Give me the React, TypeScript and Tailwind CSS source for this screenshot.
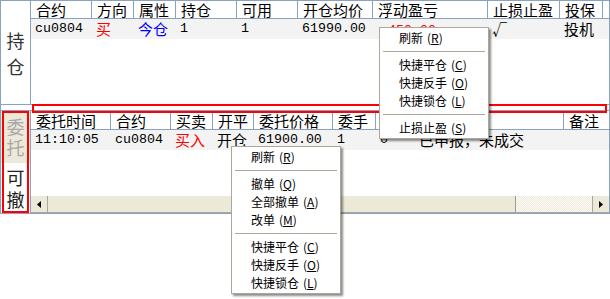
import React from 'react';

const CJK = "font-['Noto_Sans_CJK_SC',sans-serif]";
const MONO = "font-['Liberation_Mono','Noto_Sans_CJK_SC',monospace]";

type Cell = { t: string; w: string; mono?: boolean; color?: string; extra?: string };

const topHeader: Cell[] = [
  { t: '合约', w: 'w-[61px]' },
  { t: '方向', w: 'w-[42px]' },
  { t: '属性', w: 'w-[42px]' },
  { t: '持仓', w: 'w-[61px]' },
  { t: '可用', w: 'w-[61px]' },
  { t: '开仓均价', w: 'w-[75px]' },
  { t: '浮动盈亏', w: 'w-[115px]' },
  { t: '止损止盈', w: 'w-[72px]' },
  { t: '投保', w: 'w-[43px]' },
];

const topRow: Cell[] = [
  { t: 'cu0804', w: 'w-[61px]', mono: true },
  { t: '买', w: 'w-[42px]', color: 'text-[#ff0000]' },
  { t: '今仓', w: 'w-[42px]', color: 'text-[#0000ff]' },
  { t: '1', w: 'w-[61px]', mono: true },
  { t: '1', w: 'w-[61px]', mono: true },
  { t: '61990.00', w: 'w-[75px]', mono: true },
  { t: '-450.00', w: 'w-[115px]', mono: true, color: 'text-[#ff0000]', extra: 'pl-[7px] pt-[3px]' },
  { t: '√', w: 'w-[72px]' },
  { t: '投机', w: 'w-[43px]' },
];

const botHeader: Cell[] = [
  { t: '委托时间', w: 'w-[80px]' },
  { t: '合约', w: 'w-[60px]' },
  { t: '买卖', w: 'w-[42px]' },
  { t: '开平', w: 'w-[41px]' },
  { t: '委托价格', w: 'w-[79px]' },
  { t: '委手', w: 'w-[43px]' },
  { t: '成交', w: 'w-[39px]' },
  { t: '状态', w: 'w-[149px]' },
];

const botRow: Cell[] = [
  { t: '11:10:05', w: 'w-[80px]', mono: true },
  { t: 'cu0804', w: 'w-[60px]', mono: true },
  { t: '买入', w: 'w-[42px]', color: 'text-[#ff0000]' },
  { t: '开仓', w: 'w-[41px]' },
  { t: '61900.00', w: 'w-[79px]', mono: true },
  { t: '1', w: 'w-[43px]', mono: true },
  { t: '0', w: 'w-[39px]', mono: true },
  { t: '已申报，未成交', w: 'w-[149px]' },
];

function HeaderRow({ cells, last, tall }: { cells: Cell[]; last?: string; tall?: boolean }) {
  return (
    <div className={`flex ${tall ? 'h-[19px]' : 'h-[18px]'} border-b border-[#88a2c0] bg-white shrink-0`}>
      {cells.map((c, i) => (
        <div
          key={i}
          className={`${c.w} shrink-0 h-full border-r border-[#88a2c0] pl-[5px] flex items-center whitespace-nowrap text-[15px] leading-[17px] text-black ${CJK}`}
        >
          {c.t}
        </div>
      ))}
      <div className={`flex-1 h-full pl-[5px] flex items-center whitespace-nowrap text-[15px] leading-[17px] text-black ${CJK}`}>
        {last}
      </div>
    </div>
  );
}

function DataRow({ cells }: { cells: Cell[] }) {
  return (
    <div className="flex h-[20px] bg-[#f3f3f3] shrink-0">
      {cells.map((c, i) => (
        <div
          key={i}
          className={`${c.w} shrink-0 h-full ${c.extra ?? 'pl-[4px]'} flex items-center whitespace-nowrap leading-[18px] ${c.color ?? 'text-black'} ${
            c.mono ? `${MONO} text-[13.3px]` : `${CJK} text-[15px]`
          }`}
        >
          {c.t}
        </div>
      ))}
      <div className="flex-1" />
    </div>
  );
}

type MenuEntry = { label?: string; key?: string; sep?: boolean };

function Menu({ items, pos }: { items: MenuEntry[]; pos: string }) {
  return (
    <div
      className={`absolute ${pos} w-[110px] bg-white border border-[#aca899] py-[1px] shadow-[2px_2px_2px_rgba(0,0,0,0.45)] ${CJK} text-[12px] text-black`}
    >
      {items.map((it, i) =>
        it.sep ? (
          <div key={i} className="h-[9px] flex items-center px-[3px]">
            <div className="h-px w-full bg-[#aca899]" />
          </div>
        ) : (
          <div key={i} className="h-[18px] pl-[19px] flex items-center whitespace-nowrap leading-[16px]">
            {it.label}
            <span className="ml-[4px]">
              (<span className="underline">{it.key}</span>)
            </span>
          </div>
        )
      )}
    </div>
  );
}

function Arrow({ dir }: { dir: 'l' | 'r' }) {
  return (
    <svg width="4" height="7" viewBox="0 0 4 7">
      {dir === 'l' ? <polygon points="4,0 4,7 0,3.5" fill="#000" /> : <polygon points="0,0 0,7 4,3.5" fill="#000" />}
    </svg>
  );
}

export default function App() {
  return (
    <div className="w-[610px] h-[299px] bg-white">
      <div className="relative w-[610px] h-[214px] border border-[#88a2c0] flex flex-col bg-white">
        {/* Top panel: 持仓 */}
        <div className="flex h-[104px] border-b border-[#88a2c0] shrink-0">
          <div className="w-[30px] shrink-0 border-r border-[#88a2c0] flex flex-col items-center justify-center">
            <div className={`${CJK} text-[18px] leading-[26px] text-[#333] flex flex-col items-center`}>
              <span>持</span>
              <span>仓</span>
            </div>
          </div>
          <div className="flex-1 flex flex-col">
            <HeaderRow cells={topHeader} />
            <DataRow cells={topRow} />
          </div>
        </div>

        {/* splitter */}
        <div className="h-[5px] shrink-0 bg-white" />

        {/* Bottom panel: 委托 */}
        <div className="flex flex-1 border-t border-[#88a2c0]">
          <div className="w-[30px] shrink-0 border-r border-[#88a2c0] flex flex-col">
            <div className="h-[52px] bg-[#ece9d8] flex flex-col items-center justify-center">
              <div className={`${CJK} text-[18px] leading-[21px] text-[#a8a8a8] flex flex-col items-center`}>
                <span>委</span>
                <span>托</span>
              </div>
            </div>
            <div className="flex-1 flex flex-col items-center justify-center">
              <div className={`${CJK} text-[18px] leading-[22px] text-[#222] flex flex-col items-center`}>
                <span>可</span>
                <span>撤</span>
              </div>
            </div>
          </div>
          <div className="flex-1 flex flex-col">
            <HeaderRow cells={botHeader} last="备注" tall />
            <DataRow cells={botRow} />
            <div className="flex-1" />
            {/* horizontal scrollbar */}
            <div className="h-[17px] flex shrink-0 border-b border-[#aca899]">
              <div className="w-[17px] shrink-0 bg-[#ece9d8] border-r border-[#aca899] flex items-center justify-center">
                <Arrow dir="l" />
              </div>
              <div className="w-[468px] shrink-0 bg-[#ece9d8] border-r border-[#a09d8f]" />
              <div className="flex-1 bg-[repeating-conic-gradient(#eeeadc_0_25%,#fcfbf7_0_50%)] bg-[length:2px_2px]" />
              <div className="w-[17px] shrink-0 bg-[#ece9d8] border-l border-[#aca899] flex items-center justify-center">
                <Arrow dir="r" />
              </div>
            </div>
          </div>
        </div>

        {/* annotation boxes */}
        <div className="absolute left-[31px] top-[103px] w-[575px] h-[9px] border-2 border-[#ff0000]" />
        <div className="absolute left-[1px] top-[110px] w-[27px] h-[102px] border-2 border-[#ff0000]" />

        {/* context menus */}
        <Menu
          pos="left-[378px] top-[26px]"
          items={[
            { label: '刷新', key: 'R' },
            { sep: true },
            { label: '快捷平仓', key: 'C' },
            { label: '快捷反手', key: 'O' },
            { label: '快捷锁仓', key: 'L' },
            { sep: true },
            { label: '止损止盈', key: 'S' },
          ]}
        />
        <Menu
          pos="left-[230px] top-[145px]"
          items={[
            { label: '刷新', key: 'R' },
            { sep: true },
            { label: '撤单', key: 'Q' },
            { label: '全部撤单', key: 'A' },
            { label: '改单', key: 'M' },
            { sep: true },
            { label: '快捷平仓', key: 'C' },
            { label: '快捷反手', key: 'O' },
            { label: '快捷锁仓', key: 'L' },
          ]}
        />
      </div>
    </div>
  );
}
